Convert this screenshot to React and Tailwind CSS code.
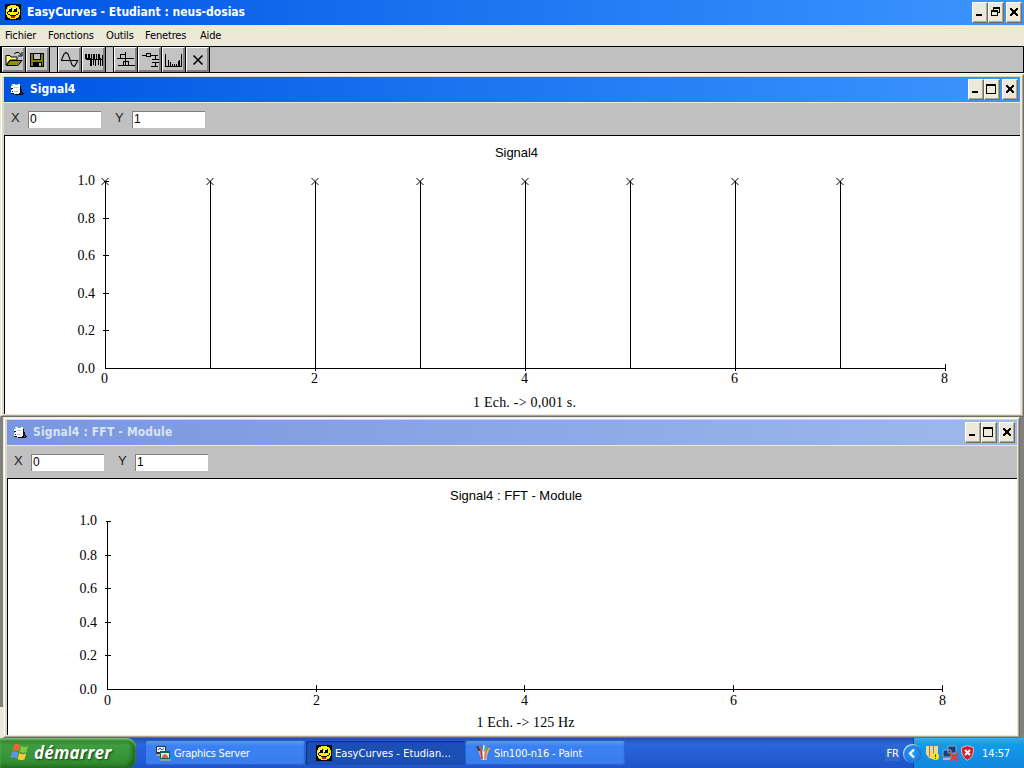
import React from "react";

const UI = "font-['DejaVu_Sans_Condensed','DejaVu_Sans',sans-serif]";

function Smiley({ className = "" }) {
  return (
    <svg className={`h-4 w-4 shrink-0 ${className}`} viewBox="0 0 16 16" shapeRendering="crispEdges">
      <rect width="16" height="16" fill="#000" />
      <path d="M5 1h6v1h2v1h1v2h1v6h-1v2h-1v1h-2v1H5v-1H3v-1H2v-2H1V5h1V3h1V2h2z" fill="#fff200" />
      <path d="M3 4h4v4H3zM8 4h4v4H8z" fill="#000" />
      <path d="M3 4h3v1H3zM3 5h1v2H3zM8 4h3v1H8zM8 5h1v2H8z" fill="#fff" />
      <path d="M2 8h1v2h2v1h6v-1h2V8h1v2h-1v1h-2v1H5v-1H3v-1H2z" fill="#000" />
      <path d="M6 12h4v2H6z" fill="#e01010" />
    </svg>
  );
}

function DocIcon() {
  return (
    <svg className="h-[14px] w-[15px] shrink-0" viewBox="0 0 15 14" shapeRendering="crispEdges">
      <path d="M2 1h8v2h1v7H9v1H4v-1H1V7h1V5H1V2h1z" fill="#fff" />
      <path d="M1 2h2v1H1zM5 1h3v1H5z" fill="#00d0d8" />
      <path d="M4 4h4v1H4zM4 8h4v1H4z" fill="#c0c0c0" />
      <path d="M1 5h2v1H1zM2 8h1v1H2zM1 10h3v1H1zM10 3h1v3h1v3h1v1h-2v1H9v-1h1z" fill="#111" />
      <path d="M5 11h7v-1h2v1h-1v1H5z" fill="#000" />
    </svg>
  );
}

function CaptionButton({ kind, className = "" }) {
  return (
    <div className={`h-[21px] w-4 border border-t-white border-l-white border-r-[#716f64] border-b-[#716f64] bg-[#ece9d8] shadow-[inset_-1px_-1px_0_#aca899] ${className}`}>
      <svg className="block h-[19px] w-[14px]" viewBox="0 0 14 19" shapeRendering="crispEdges">
        {kind === "min" && <path d="M3 11h6v2H3z" />}
        {kind === "max" && <path d="M1 4h10v10H1zM2 6v7h8V6z" fillRule="evenodd" />}
        {kind === "restore" && (
          <path fillRule="evenodd" d="M4 4h7v6H9V9h1V6H5v1H4zM2 7h7v6H2zM3 9v3h5V9z" />
        )}
        {kind === "close" && (
          <path d="M3 5h2v1h1v1h2V6h1V5h2v2h-1v1H9v2h1v1h1v2H9v-1H8v-1H6v1H5v1H3v-2h1v-1h1V8H4V7H3z" />
        )}
      </svg>
    </div>
  );
}

const toolIcons = {
  open: (
    <>
      <path d="M4 8.500h4l1 1.500h6v3H8l-4 5z" fill="#ffff80" stroke="#000" />
      <path d="M4.500 18.500l3.500-5h12l-4 5z" fill="#909000" stroke="#000" />
      <path d="M12 7l2-1.500h3l2 2.500M20 5v4h-4" stroke="#000" />
    </>
  ),
  save: (
    <>
      <path d="M4.500 6.500h13v13h-13z" fill="#808000" stroke="#000" />
      <path d="M7.500 6.500h7v6h-7z" fill="#c0c0c0" stroke="#000" />
      <path d="M7 15h9v4H7z" fill="#000" />
      <path d="M13 16h2v3h-2z" fill="#c0c0c0" />
    </>
  ),
  sine: <path d="M3 13.500h17M3.500 13L6 7l2-1.500L10 7l4 11 2 1.500 1.500-1.500 2.500-5" stroke="#000" strokeWidth="1.100" />,
  pulse: (
    <path d="M3 7h2v4h1V7h2v4h1V7h1v5h1V7h2v5h1V7h1v5h1V7h2v4h1v1h1V8h1v11h-1v-6h-1v6h-1v-6h-1v5h-1v-5h-2v6h-1v-6h-1v5h-1v-5h-1v6H8v-6H4v-1H3z" fill="#000" />
  ),
  filters: (
    <path d="M3 11.500h17M6.500 11V7.500h5M11.500 5v6M4 18.500h17M9.500 18v-3.500h5V18M11.500 12v6" stroke="#000" />
  ),
  circuit: (
    <path d="M4 8.500h4M8.500 6.500h4v3h-4zM13 8.500h7M17.500 9v3M14 12.500h7M14 15.500h7M17.500 16v3M13 19.500h7" stroke="#000" />
  ),
  spectrum: (
    <path d="M3.500 7v12M3 19.500h17M6.500 13v6M8.500 15v4M10.500 17v2M12.500 17v2M14.500 17v2M16.500 14v5M17.500 13v6M19.500 7v12" stroke="#000" />
  ),
  close: <path d="M7.500 8.500l9 9M16.500 8.500l-9 9" stroke="#000" strokeWidth="1.600" />,
};

function ToolGroup({ names }) {
  return (
    <div className="flex gap-px bg-black px-px">
      {names.map((n) => (
        <div key={n} className="h-[25px] w-[23px] border border-t-white border-l-white border-r-[#808080] border-b-[#808080] bg-[#c3c3c3] shadow-[inset_-1px_-1px_0_#808080]">
          <svg className="-mt-px -ml-px block h-[25px] w-[24px]" viewBox="0 0 24 25" fill="none" shapeRendering={n === "sine" || n === "close" || n === "open" ? "auto" : "crispEdges"}>
            {toolIcons[n]}
          </svg>
        </div>
      ))}
    </div>
  );
}

function Field({ label, value, className = "" }) {
  return (
    <div className={`flex ${className}`}>
      <span className="-mt-px w-[17px] font-['Liberation_Sans',sans-serif] text-[13px] leading-[15px] text-[#222]">{label}</span>
      <div className="h-[17px] w-[73px] border-t border-l border-[#808080] bg-white pl-px font-['Liberation_Sans',sans-serif] text-[12px] leading-[15px]">{value}</div>
    </div>
  );
}

function ChartWindow({ title, active, children }) {
  return (
    <div className="flex h-full flex-col border-t border-r border-b border-l border-t-[#ece9d8] border-r-[#716f64] border-b-[#716f64] border-l-[#ece9d8] bg-[#ece9d8]">
      <div className="flex min-h-0 flex-1 flex-col border border-t-white border-r-[#aca899] border-b-[#aca899] border-l-white">
        <div className={`flex min-h-0 flex-1 flex-col border-t border-b border-l-2 border-[#ece9d8] border-t-[#d8d4c4] border-l-[#ddd9c9] ${active ? "border-r-2" : "border-r"}`}>
          <div className={`flex h-[25px] shrink-0 items-start pr-[2px] pl-[6px] ${active ? "bg-linear-to-r from-[#0054e3] to-[#3d95ff] text-white" : "bg-linear-to-r from-[#7a96df] to-[#9db9eb] text-[#d8e4f8]"}`}>
            <div className="pt-[6px]"><DocIcon /></div>
            <span className={`${UI} ml-[5px] text-[12px] leading-[25px] font-bold whitespace-pre ${active ? "tracking-[0px]" : "tracking-[0.16px]"}`}>{title}</span>
            <div className="ml-auto flex pt-[2px]">
              <CaptionButton kind="min" />
              <CaptionButton kind="max" />
              <CaptionButton kind="close" className="ml-[2px]" />
            </div>
          </div>
          <div className="flex h-[33px] shrink-0 border-t border-[#ece9d8] bg-[#c0c0c0] pt-[8px] pl-[7px]">
            <Field label="X" value="0" />
            <Field label="Y" value="1" className="ml-[14px]" />
          </div>
          <div className="min-h-0 flex-1 overflow-hidden border-t border-l border-black bg-white">{children}</div>
        </div>
      </div>
    </div>
  );
}

function Label({ x, y, w, sans, children }) {
  return (
    <text x={x} y={y} textLength={w} className={sans ? "font-['Liberation_Sans',sans-serif] text-[13px]" : "font-['Liberation_Serif',serif] text-[14px]"}>
      {children}
    </text>
  );
}

function Chart({ left, top, width, height, title, caption, x0, y0, x1, yTicks, xTicks, stems = [], labelX, labelY, labelShift = 0 }) {
  return (
    <svg className="block" width={width} height={height} viewBox={`${left} ${top} ${width} ${height}`}>
      <Label sans {...title} />
      <g stroke="#000" shapeRendering="crispEdges">
        <path d={`M${x0 + 0.5} ${yTicks[0]}V${y0 + 0.5}H${x1 + 1}`} fill="none" />
        {yTicks.slice(0, 5).map((y, i) => <path key={y} d={`M${i ? x0 - 2 : x0 - 1} ${y + 0.5}H${x0 + 4}`} />)}
        {xTicks.slice(1).map((x) => <path key={x} d={`M${x + 0.5} ${y0 - 4}v7`} />)}
        {stems.map((x) => <path key={x} d={`M${x + 0.5} ${yTicks[0]}V${y0}`} />)}
      </g>
      {stems.map((x) => (
        <path key={x} d={`M${x - 3.5} ${yTicks[0] - 3}l7 7m0 -7l-7 7`} stroke="#000" fill="none" />
      ))}
      {yTicks.map((y, i) => (
        <Label key={y} x={labelX} y={y + (i ? 4.5 : 4)} w={17.5}>{((5 - i) / 5).toFixed(1)}</Label>
      ))}
      {xTicks.map((x, i) => <Label key={x} x={x - 3.5 + labelShift} y={labelY} w={7}>{i * 2}</Label>)}
      <Label {...caption} />
    </svg>
  );
}

function WindowsFlag() {
  return (
    <svg className="h-[20px] w-[20px] shrink-0" viewBox="0 0 20 20">
      <path d="M4 3c2-1.600 4-1.500 6 .2L8.500 9.500C6.500 8 4.500 8 2.500 9.300z" fill="#f2612c" />
      <path d="M11 3.700c2 1.500 4.500 1.600 7 .3l-1.500 6c-2.500 1.300-5 1.200-7-.2z" fill="#7ccb3c" />
      <path d="M2 10.500c2-1.300 4-1.300 6.200.2l-1.500 6C4.500 15 2.500 15 .5 16.300z" fill="#5f94f5" />
      <path d="M9.200 11c2.200 1.500 4.500 1.600 7 .3l-1.600 6c-2.400 1.300-4.800 1.200-7-.2z" fill="#fbcb31" />
    </svg>
  );
}

function ServerIcon() {
  return (
    <svg className="h-4 w-4 shrink-0" viewBox="0 0 16 16">
      <path d="M1 1h10v8H1z" fill="#333" />
      <path d="M2 2h8v5H2z" fill="#e8f0f0" />
      <path d="M3 5l2-2 2 2 2-2" stroke="#3355dd" fill="none" />
      <path d="M1 9h5v2H2z" fill="#aaa" />
      <path d="M5 6h10v8H5z" fill="#0b6060" />
      <path d="M6 8h8v5H6z" fill="#e8e8d8" />
      <path d="M7 13c0-5 6-5 6 0z" fill="#f05050" />
      <path d="M4 14h12v2H6z" fill="#999" />
    </svg>
  );
}

function PaintIcon() {
  return (
    <svg className="h-4 w-4 shrink-0" viewBox="0 0 16 16">
      <path d="M2 1l4 8" stroke="#5a3518" strokeWidth="1.800" />
      <path d="M5.500 1l1.500 8" stroke="#a86a30" strokeWidth="1.600" />
      <path d="M9 0L8 9" stroke="#dff0ff" strokeWidth="1.500" />
      <path d="M14.500 3l-4 7" stroke="#f0a030" strokeWidth="2" />
      <path d="M11.500 1L9.500 9" stroke="#62b840" strokeWidth="1.800" />
      <path d="M3.500 6h9.500l-1.500 9h-5z" fill="#b9c9dd" />
      <path d="M6 6l1 8" stroke="#d83828" strokeWidth="1.800" />
      <path d="M8.500 7v7" stroke="#fff" />
      <path d="M11 6l-1 8" stroke="#e77828" strokeWidth="1.800" />
    </svg>
  );
}

function Task({ icon, label, active, track = "" }) {
  return (
    <div className={`mt-[3px] flex h-[24px] w-[159px] items-center gap-[3px] rounded-[2px] ${active ? "bg-[#1c4fb4] pl-[10px] shadow-[inset_1px_1px_1px_#0e3076]" : "bg-linear-to-b from-[#5a9bfb] via-[#3c81f3] via-20% to-[#397cec] pl-[9px] shadow-[inset_-1px_-1px_1px_#2c62cc]"}`}>
      {icon}
      <span className={`${UI} text-[11px] leading-[16px] whitespace-pre text-white ${active ? "pt-[2px]" : "pt-px"} ${track}`}>{label}</span>
    </div>
  );
}

function Taskbar() {
  return (
    <div className={`flex h-[30px] w-full bg-linear-to-b from-[#1f4fb5] via-[#2a66df] via-20% to-[#1f54c8] ${UI}`}>
      <div className="flex h-full w-[136px] shrink-0 rounded-r-[9px] bg-linear-to-b from-[#2e7a2e] via-[#3f9d3f] via-25% to-[#2f8a2f] pl-[10px] shadow-[inset_0_2px_2px_#6dbb6d,inset_-4px_-2px_4px_#1d671d]">
        <div className="pt-[4px]"><WindowsFlag /></div>
        <span className="ml-[4px] font-['Open_Sans','Noto_Sans',sans-serif] text-[17px] leading-[29px] font-bold tracking-[0.2px] text-white italic [text-shadow:1px_1px_2px_#173f17]">démarrer</span>
      </div>
      <div className="ml-[10px] flex gap-[1px]">
        <Task icon={<ServerIcon />} label="Graphics Server" track="tracking-[-0.25px]" />
        <Task icon={<Smiley />} label="EasyCurves - Etudian..." active track="tracking-[0.05px]" />
        <Task icon={<PaintIcon />} label="Sin100-n16 - Paint" track="tracking-[-0.15px]" />
      </div>
      <div className="ml-auto flex text-[11px] text-white">
        <div className="mt-[8px] mr-[3px] h-[15px] bg-[#316ac5] px-px leading-[16px]">FR</div>
        <div className="relative z-10 mt-[6px] -mr-[9px] h-[19px] w-[19px] rounded-full bg-radial from-[#2aa0f5] to-[#1764d2] shadow-[inset_1px_1px_1px_#bfe2ff]">
          <svg className="block h-[19px] w-[19px]" viewBox="0 0 19 19"><path d="M11 5.500L7 9.500l4 4" stroke="#fff" strokeWidth="2.200" fill="none" /></svg>
        </div>
        <div className="flex w-[111px] border-l border-[#0b3f98] bg-linear-to-b from-[#2cb0f2] via-[#139bec] via-20% to-[#1186dd] pt-[7px] pl-[11px]">
          <svg className="h-4 w-4" viewBox="0 0 16 16">
            <path d="M1 1h12v10l-5 3-4-1-3-4z" fill="#f3d98f" />
            <path d="M4.500 1v11M8.500 1v12" stroke="#a87d32" />
            <circle cx="10.500" cy="11.500" r="3.500" fill="#ffe900" />
            <path d="M10.500 9.500v2.500m0 1v1" stroke="#443300" />
          </svg>
          <svg className="ml-px h-4 w-[17px]" viewBox="0 0 17 16">
            <path d="M6 1h8v7H6zM1 5h8v7H1z" fill="#243b70" stroke="#8fa5cc" />
            <path d="M1 14h8" stroke="#a8b8d0" strokeWidth="2" />
            <path d="M8 8l8 8M16 8l-8 8" stroke="#ef3b2d" strokeWidth="2.400" />
          </svg>
          <svg className="ml-px h-4 w-4" viewBox="0 0 16 16">
            <path d="M7.500 .6l5.900 2c.4 6-1 10-5.900 12.700C2.600 12.600 1.200 8.600 1.600 2.600z" fill="#d31d2b" stroke="#e7b8c0" />
            <path d="M5 5l5 5M10 5l-5 5" stroke="#fff" strokeWidth="2" />
          </svg>
          <span className="ml-[6px] leading-[17px] tracking-[-0.1px]">14:57</span>
        </div>
      </div>
    </div>
  );
}

export default function App() {
  return (
    <div className={`flex h-[768px] w-[1024px] flex-col overflow-hidden bg-[#808080] text-black ${UI}`}>
      <div className="flex h-[25px] shrink-0 bg-linear-to-r from-[#0054e3] to-[#3d95ff] pr-[2px] pl-[5px]">
        <Smiley className="mt-[4px]" />
        <span className="ml-[6px] text-[12px] leading-[25px] font-bold whitespace-pre text-white">EasyCurves - Etudiant : neus-dosias</span>
        <div className="ml-auto flex pt-[2px]">
          <CaptionButton kind="min" />
          <CaptionButton kind="restore" />
          <CaptionButton kind="close" className="ml-[2px]" />
        </div>
      </div>
      <div className="flex h-[21px] shrink-0 bg-[#ece9d8] pl-[5px] text-[11px] leading-[21px] tracking-[-0.15px]">
        <span className="w-[43px]">Fichier</span>
        <span className="w-[58px]">Fonctions</span>
        <span className="w-[39px]">Outils</span>
        <span className="w-[55px]">Fenetres</span>
        <span>Aide</span>
      </div>
      <div className="flex h-[27px] shrink-0 gap-[7px] border border-black bg-[#c0c0c0]">
        <ToolGroup names={["open", "save"]} />
        <ToolGroup names={["sine", "pulse"]} />
        <ToolGroup names={["filters", "circuit", "spectrum", "close"]} />
      </div>
      <div className="h-px shrink-0 bg-white" />
      <div className="h-[343px] shrink-0">
        <ChartWindow title="Signal4" active>
          <Chart
            left={5} top={136} width={1015} height={276}
            title={{ x: 495, y: 157, w: 43, children: "Signal4" }}
            caption={{ x: 473, y: 407, w: 103, children: "1 Ech. -> 0,001 s." }}
            x0={105} x1={945} y0={368} labelX={77.5} labelY={383} labelShift={-0.5}
            yTicks={[181, 218, 255, 293, 330, 368]}
            xTicks={[105, 315, 525, 735, 945]}
            stems={[105, 210, 315, 420, 525, 630, 735, 840]}
          />
        </ChartWindow>
      </div>
      <div className="flex h-[321px] shrink-0">
        <div className="flex w-[3px] flex-col bg-[#808080]"><div className="mt-auto h-[31px] bg-[#ece9d8]" /></div>
        <div className="h-full w-[1017px]">
          <ChartWindow title="Signal4 : FFT - Module">
            <Chart
              left={8} top={479} width={1009} height={254}
              title={{ x: 450, y: 500, w: 132, children: "Signal4 : FFT - Module" }}
              caption={{ x: 476.5, y: 727, w: 98, children: "1 Ech. -> 125 Hz" }}
              x0={107} x1={942} y0={689} labelX={79.5} labelY={705} labelShift={0.5}
              yTicks={[521, 555, 588, 622, 655, 689]}
              xTicks={[107, 316, 524, 733, 942]}
            />
          </ChartWindow>
        </div>
      </div>
      <Taskbar />
    </div>
  );
}
